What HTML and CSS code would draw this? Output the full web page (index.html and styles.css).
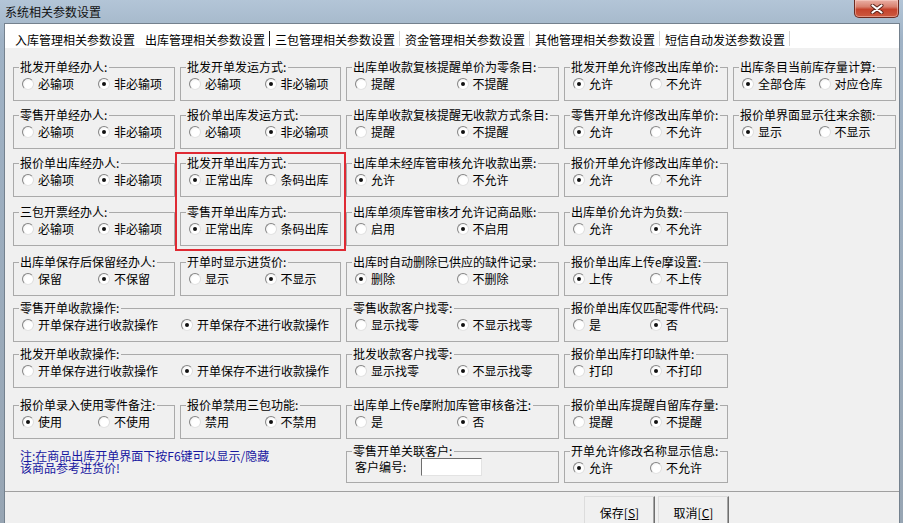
FILE: index.html
```html
<!DOCTYPE html>
<html lang="zh-CN">
<head>
<meta charset="utf-8">
<title>系统相关参数设置</title>
<link rel="stylesheet" href="styles.css">
</head>
<body>
<div class="window">
  <div class="titlebar">
    <span class="title">系统相关参数设置</span>
    <button class="close" aria-label="关闭">
      <svg width="14" height="10" viewBox="0 0 14 10"><path d="M2.5 1.5 L11.5 8.5 M11.5 1.5 L2.5 8.5" stroke="#5a2219" stroke-width="4" stroke-linecap="round"/><path d="M2.5 1.5 L11.5 8.5 M11.5 1.5 L2.5 8.5" stroke="#fff" stroke-width="2.2" stroke-linecap="round"/></svg>
    </button>
  </div>
  <div class="client">
    <div class="tabs">
      <span class="tab first">入库管理相关参数设置</span>
      <span class="tab active">出库管理相关参数设置</span>
      <span class="tab">三包管理相关参数设置</span>
      <span class="tab">资金管理相关参数设置</span>
      <span class="tab">其他管理相关参数设置</span>
      <span class="tab">短信自动发送参数设置</span>
    </div>

    <div class="content">
      <!-- column 1 -->
      <fieldset class="grp c1 r1"><legend>批发开单经办人:</legend>
        <div class="opts"><label class="opt"><span class="rb"></span>必输项</label><label class="opt"><span class="rb on"></span>非必输项</label></div></fieldset>
      <fieldset class="grp c1 r2"><legend>零售开单经办人:</legend>
        <div class="opts"><label class="opt"><span class="rb"></span>必输项</label><label class="opt"><span class="rb on"></span>非必输项</label></div></fieldset>
      <fieldset class="grp c1 r3"><legend>报价单出库经办人:</legend>
        <div class="opts"><label class="opt"><span class="rb"></span>必输项</label><label class="opt"><span class="rb on"></span>非必输项</label></div></fieldset>
      <fieldset class="grp c1 r4"><legend>三包开票经办人:</legend>
        <div class="opts"><label class="opt"><span class="rb"></span>必输项</label><label class="opt"><span class="rb on"></span>非必输项</label></div></fieldset>
      <fieldset class="grp c1 r5"><legend>出库单保存后保留经办人:</legend>
        <div class="opts"><label class="opt"><span class="rb"></span>保留</label><label class="opt"><span class="rb on"></span>不保留</label></div></fieldset>
      <fieldset class="grp wide r6"><legend>零售开单收款操作:</legend>
        <div class="opts"><label class="opt"><span class="rb"></span>开单保存进行收款操作</label><label class="opt"><span class="rb on"></span>开单保存不进行收款操作</label></div></fieldset>
      <fieldset class="grp wide r7"><legend>批发开单收款操作:</legend>
        <div class="opts"><label class="opt"><span class="rb"></span>开单保存进行收款操作</label><label class="opt"><span class="rb on"></span>开单保存不进行收款操作</label></div></fieldset>
      <fieldset class="grp c1 r8"><legend>报价单录入使用零件备注:</legend>
        <div class="opts"><label class="opt"><span class="rb on"></span>使用</label><label class="opt"><span class="rb"></span>不使用</label></div></fieldset>
      <p class="note">注:在商品出库开单界面下按F6键可以显示/隐藏<br>该商品参考进货价!</p>

      <!-- column 2 -->
      <fieldset class="grp c2 r1"><legend>批发开单发运方式:</legend>
        <div class="opts"><label class="opt"><span class="rb"></span>必输项</label><label class="opt"><span class="rb on"></span>非必输项</label></div></fieldset>
      <fieldset class="grp c2 r2"><legend>报价单出库发运方式:</legend>
        <div class="opts"><label class="opt"><span class="rb"></span>必输项</label><label class="opt"><span class="rb on"></span>非必输项</label></div></fieldset>
      <div class="hl">
        <fieldset class="grp"><legend>批发开单出库方式:</legend>
          <div class="opts"><label class="opt"><span class="rb on"></span>正常出库</label><label class="opt"><span class="rb"></span>条码出库</label></div></fieldset>
        <fieldset class="grp"><legend>零售开单出库方式:</legend>
          <div class="opts"><label class="opt"><span class="rb on"></span>正常出库</label><label class="opt"><span class="rb"></span>条码出库</label></div></fieldset>
      </div>
      <fieldset class="grp c2 r5"><legend>开单时显示进货价:</legend>
        <div class="opts"><label class="opt"><span class="rb"></span>显示</label><label class="opt"><span class="rb on"></span>不显示</label></div></fieldset>
      <fieldset class="grp c2 r8"><legend>报价单禁用三包功能:</legend>
        <div class="opts"><label class="opt"><span class="rb"></span>禁用</label><label class="opt"><span class="rb on"></span>不禁用</label></div></fieldset>

      <!-- column 3 -->
      <fieldset class="grp c3 r1"><legend>出库单收款复核提醒单价为零条目:</legend>
        <div class="opts"><label class="opt"><span class="rb"></span>提醒</label><label class="opt"><span class="rb on"></span>不提醒</label></div></fieldset>
      <fieldset class="grp c3 r2"><legend>出库单收款复核提醒无收款方式条目:</legend>
        <div class="opts"><label class="opt"><span class="rb"></span>提醒</label><label class="opt"><span class="rb on"></span>不提醒</label></div></fieldset>
      <fieldset class="grp c3 r3"><legend>出库单未经库管审核允许收款出票:</legend>
        <div class="opts"><label class="opt"><span class="rb on"></span>允许</label><label class="opt"><span class="rb"></span>不允许</label></div></fieldset>
      <fieldset class="grp c3 r4"><legend>出库单须库管审核才允许记商品账:</legend>
        <div class="opts"><label class="opt"><span class="rb"></span>启用</label><label class="opt"><span class="rb on"></span>不启用</label></div></fieldset>
      <fieldset class="grp c3 r5"><legend>出库时自动删除已供应的缺件记录:</legend>
        <div class="opts"><label class="opt"><span class="rb on"></span>删除</label><label class="opt"><span class="rb"></span>不删除</label></div></fieldset>
      <fieldset class="grp c3 r6"><legend>零售收款客户找零:</legend>
        <div class="opts"><label class="opt"><span class="rb"></span>显示找零</label><label class="opt"><span class="rb on"></span>不显示找零</label></div></fieldset>
      <fieldset class="grp c3 r7"><legend>批发收款客户找零:</legend>
        <div class="opts"><label class="opt"><span class="rb"></span>显示找零</label><label class="opt"><span class="rb on"></span>不显示找零</label></div></fieldset>
      <fieldset class="grp c3 r8"><legend>出库单上传e摩附加库管审核备注:</legend>
        <div class="opts"><label class="opt"><span class="rb"></span>是</label><label class="opt"><span class="rb on"></span>否</label></div></fieldset>
      <fieldset class="grp c3 r9 last"><legend>零售开单关联客户:</legend>
        <div class="field"><span class="flabel">客户编号:</span><span class="input"></span></div></fieldset>

      <!-- column 4 -->
      <fieldset class="grp c4 r1"><legend>批发开单允许修改出库单价:</legend>
        <div class="opts"><label class="opt"><span class="rb on"></span>允许</label><label class="opt"><span class="rb"></span>不允许</label></div></fieldset>
      <fieldset class="grp c4 r2"><legend>零售开单允许修改出库单价:</legend>
        <div class="opts"><label class="opt"><span class="rb on"></span>允许</label><label class="opt"><span class="rb"></span>不允许</label></div></fieldset>
      <fieldset class="grp c4 r3"><legend>报价开单允许修改出库单价:</legend>
        <div class="opts"><label class="opt"><span class="rb on"></span>允许</label><label class="opt"><span class="rb"></span>不允许</label></div></fieldset>
      <fieldset class="grp c4 r4"><legend>出库单价允许为负数:</legend>
        <div class="opts"><label class="opt"><span class="rb"></span>允许</label><label class="opt"><span class="rb on"></span>不允许</label></div></fieldset>
      <fieldset class="grp c4 r5"><legend>报价单出库上传e摩设置:</legend>
        <div class="opts"><label class="opt"><span class="rb on"></span>上传</label><label class="opt"><span class="rb"></span>不上传</label></div></fieldset>
      <fieldset class="grp c4 r6"><legend>报价单出库仅匹配零件代码:</legend>
        <div class="opts"><label class="opt"><span class="rb"></span>是</label><label class="opt"><span class="rb on"></span>否</label></div></fieldset>
      <fieldset class="grp c4 r7"><legend>报价单出库打印缺件单:</legend>
        <div class="opts"><label class="opt"><span class="rb"></span>打印</label><label class="opt"><span class="rb on"></span>不打印</label></div></fieldset>
      <fieldset class="grp c4 r8"><legend>报价单出库提醒自留库存量:</legend>
        <div class="opts"><label class="opt"><span class="rb"></span>提醒</label><label class="opt"><span class="rb on"></span>不提醒</label></div></fieldset>
      <fieldset class="grp c4 r9 last"><legend>开单允许修改名称显示信息:</legend>
        <div class="opts"><label class="opt"><span class="rb on"></span>允许</label><label class="opt"><span class="rb"></span>不允许</label></div></fieldset>

      <!-- column 5 -->
      <fieldset class="grp c5 r1"><legend>出库条目当前库存量计算:</legend>
        <div class="opts"><label class="opt"><span class="rb on"></span>全部仓库</label><label class="opt"><span class="rb"></span>对应仓库</label></div></fieldset>
      <fieldset class="grp c5 r2"><legend>报价单界面显示往来余额:</legend>
        <div class="opts"><label class="opt"><span class="rb on"></span>显示</label><label class="opt"><span class="rb"></span>不显示</label></div></fieldset>
    </div>

    <div class="footer">
      <button class="btn">保存[<u>S</u>]</button>
      <button class="btn">取消[<u>C</u>]</button>
    </div>
  </div>
</div>
</body>
</html>
```

FILE: styles.css
```css
* { box-sizing: border-box; }
html, body { margin: 0; padding: 0; }
body {
  width: 903px;
  height: 523px;
  overflow: hidden;
  font-family: "Noto Sans CJK SC", "Noto Sans CJK TC", sans-serif;
  font-size: 12px;
  line-height: 12px;
  color: #000;
  background: linear-gradient(#b3c5d7, #9fb2c5 40px, #97a5b3);
}
.window {
  display: flex;
  flex-direction: column;
  height: 523px;
}
.titlebar {
  height: 23px;
  flex: none;
  display: flex;
  align-items: flex-start;
  justify-content: space-between;
}
.title {
  padding: 6px 0 0 5px;
  line-height: 12px;
  color: #111;
}
.close {
  width: 45px;
  height: 18px;
  margin: 0 4px 0 0;
  padding: 0;
  border: 1px solid #6b2a20;
  border-top: none;
  border-radius: 0 0 5px 5px;
  background: linear-gradient(#eab0a5, #d8806e 40%, #c5432c 55%, #cc5a40);
  box-shadow: inset 0 0 0 1px rgba(255, 220, 210, 0.45);
  display: flex;
  align-items: center;
  justify-content: center;
}
.client {
  flex: 1;
  margin: 0 3px 0 4px;
  border: 1px solid #74818e;
  border-bottom: none;
  background: #f0f0f0;
  display: flex;
  flex-direction: column;
}
.tabs {
  display: flex;
  flex: none;
  height: 24px;
  background: #fff;
  padding-left: 5px;
}
.tab {
  height: 15px;
  margin-top: 7px;
  padding: 2px 4px 0 5px;
  line-height: 13px;
  white-space: nowrap;
  border-right: 1px solid #d2d2d2;
}
.tab.first { border-right-color: transparent; }
.tab.active { border-right-color: #1a1a1a; }

.content {
  display: grid;
  flex: none;
  grid-template-columns: 162px 161px 213px 164px 163px;
  grid-template-rows: 48px 48px 49px 50px 46px 46px 51px 46px 38px;
  column-gap: 5px;
  align-items: start;
  padding: 13px 0 8px 8px;
}
.c1 { grid-column: 1; }
.c2 { grid-column: 2; }
.c3 { grid-column: 3; margin-left: 3px; }
.c4 { grid-column: 4; margin-left: 3px; }
.c5 { grid-column: 5; margin-left: 1px; }
.wide { grid-column: 1 / 3; }
.r1 { grid-row: 1; }
.r2 { grid-row: 2; }
.r3 { grid-row: 3; }
.r4 { grid-row: 4; }
.r5 { grid-row: 5; }
.r6 { grid-row: 6; }
.r7 { grid-row: 7; }
.r8 { grid-row: 8; }
.r9 { grid-row: 9; }

.grp {
  margin: 0;
  padding: 0 0 0 5px;
  border: 1px solid #aaaaaa;
  height: 40px;
  min-width: 0;
}
.grp.last { height: 38px; }
.grp legend {
  margin: 0;
  padding: 0 2px 0 1px;
  line-height: 12px;
  white-space: nowrap;
}
.opts {
  display: grid;
  grid-template-columns: 1fr 1fr;
  padding-left: 3px;
  margin-top: 5px;
}
.opt {
  display: flex;
  align-items: center;
  height: 12px;
  white-space: nowrap;
}
.rb {
  position: relative;
  flex: none;
  width: 12px;
  height: 12px;
  margin-right: 4px;
  border-radius: 50%;
  border: 1px solid;
  border-color: #858585 #dedede #e4e4e4 #858585;
  background: radial-gradient(circle at 60% 60%, #ffffff 45%, #e6e6e6 100%);
}
.rb.on::after {
  content: "";
  position: absolute;
  left: 3px;
  top: 3px;
  width: 4px;
  height: 4px;
  border-radius: 50%;
  background: #111;
}

.hl {
  grid-column: 2;
  grid-row: 3 / 5;
  display: flex;
  flex-direction: column;
  gap: 9px;
  outline: 2px solid #df2a33;
  outline-offset: 3px;
}

.note {
  grid-column: 1 / 3;
  grid-row: 9;
  margin: 5px 0 0 7px;
  color: #1717a0;
  line-height: 12px;
  white-space: nowrap;
}

.field {
  display: flex;
  align-items: center;
  padding-left: 3px;
  margin-top: 1px;
}
.flabel { width: 66px; }
.input {
  width: 61px;
  height: 18px;
  background: #fff;
  border: 1px solid;
  border-color: #6e6e6e #e3e3e3 #e3e3e3 #6e6e6e;
}

.footer {
  flex: 1;
  display: flex;
  justify-content: flex-end;
  gap: 3px;
  padding: 4px 170px 0 0;
  border-top: 1px solid #a0a0a0;
}
.btn {
  width: 71px;
  height: 34px;
  padding: 10px 0 0;
  font: inherit;
  line-height: 12px;
  color: #000;
  background: #f0f0f0;
  border: 1px solid;
  border-color: #dcdcdc #6f6f6f #6f6f6f #dcdcdc;
  box-shadow: inset -1px 0 0 #a5a5a5;
  display: flex;
  justify-content: center;
  align-items: flex-start;
}
```
